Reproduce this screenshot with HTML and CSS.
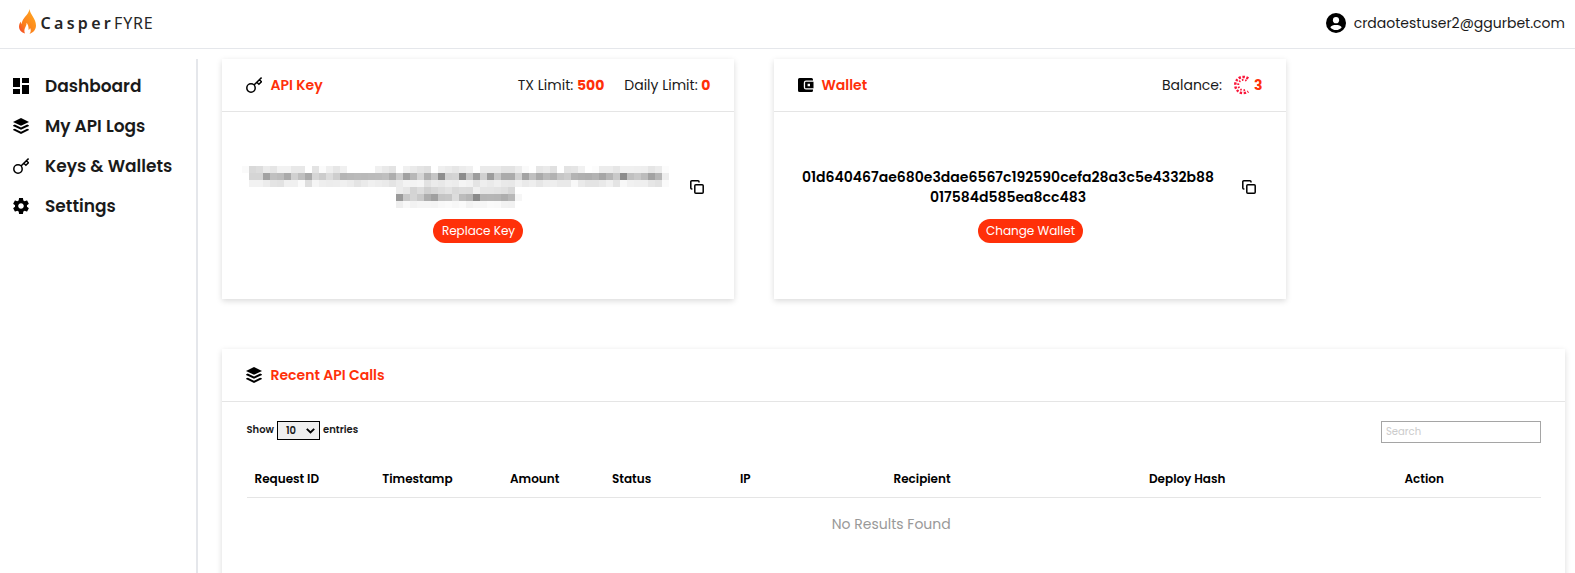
FILE: index.html
```html
<!DOCTYPE html>
<html lang="en">
<head>
<meta charset="utf-8">
<title>CasperFYRE</title>
<link rel="stylesheet" href="styles.css">
</head>
<body>
<svg class="defs" width="0" height="0">
  <symbol id="layers" viewBox="0 0 16 16"><path d="M8 0 16 3.900 8 7.800 0 3.900Z"/><path d="M0 7.400 1.800 6.600 8 9.600 14.200 6.600 16 7.400V8L8 11.800 0 8Z"/><path d="M0 11.500 1.800 10.700 8 13.700 14.200 10.700 16 11.500V12.100L8 16 0 12.100Z"/></symbol>
  <symbol id="key" viewBox="0 0 16 16"><g fill="none" stroke="#000" stroke-width="1.500"><circle cx="5" cy="11" r="4.200"/><path d="M8 8 15.600.5M10.800 5.200l2.100 2.100 2.500-2.500-2-2"/></g></symbol>
  <symbol id="copy" viewBox="0 0 14 14"><g fill="none" stroke="#000" stroke-width="1.500"><rect x="4.800" y="4.800" width="8.400" height="8.400" rx="1"/><path d="M2.400 9H1.800a1 1 0 0 1-1-1V1.800a1 1 0 0 1 1-1H8a1 1 0 0 1 1 1v.8"/></g></symbol>
</svg>
<header class="topbar">
  <div class="logo">
    <svg class="flame" viewBox="0 0 17 25"><defs><linearGradient id="fire" x1="0" y1="1" x2=".8" y2=".2"><stop offset="0" stop-color="#f23a2c"/><stop offset=".4" stop-color="#fb7d1c"/><stop offset="1" stop-color="#ffa020"/></linearGradient></defs><path fill="url(#fire)" d="M10.500 0C11 5.500 17 9.500 17 16.500c0 4-2.500 7-6.500 8.500 1.500-2 1.600-4 .6-6-.3 1-.8 1.600-1.500 2 .2-3-.6-5.500-2-7.200.2 2.800-1.800 4.700-2.200 7.200-.2 1.300.1 2.500.6 3.600C2.500 23.500 0 21 0 17.500c0-2.300 1-4 2-5 0 1.200.2 2 .7 2.700C3 8.500 9.500 6.500 10.500 0Z"/></svg>
    <span class="casper">Casper</span><span class="fyre">FYRE</span>
  </div>
  <div class="user">
    <svg class="avatar" viewBox="0 0 20 20"><circle cx="10" cy="10" r="10"/><circle cx="10" cy="7.200" r="3.100" fill="#fff"/><path fill="#fff" d="M4.300 14.200C5.200 12.500 7.500 12 10 12s4.800.5 5.700 2.200c-1.300 1.800-3.300 2.900-5.700 2.900s-4.400-1.100-5.700-2.900Z"/></svg>
    <span>crdaotestuser2@ggurbet.com</span>
  </div>
</header>
<div class="shell">
  <nav class="sidebar">
    <a class="nav-item"><svg class="icon" viewBox="0 0 16 16"><path d="M0 0h7v9H0zM9 0h7v5H9zM0 11h7v5H0zM9 7h7v9H9z"/></svg><span>Dashboard</span></a>
    <a class="nav-item"><svg class="icon"><use href="#layers"/></svg><span>My API Logs</span></a>
    <a class="nav-item"><svg class="icon"><use href="#key"/></svg><span>Keys &amp; Wallets</span></a>
    <a class="nav-item"><svg class="icon" viewBox="2 2 20 20"><path d="M19.430 12.980c.04-.32.07-.64.07-.98s-.03-.66-.07-.98l2.110-1.650c.19-.15.24-.42.12-.64l-2-3.460c-.12-.22-.39-.3-.61-.22l-2.490 1c-.52-.4-1.080-.73-1.690-.98l-.38-2.650C14.460 2.180 14.250 2 14 2h-4c-.25 0-.46.18-.49.42l-.38 2.650c-.61.25-1.170.59-1.690.98l-2.490-1c-.23-.09-.49 0-.61.22l-2 3.460c-.13.22-.07.49.12.64l2.110 1.650c-.04.32-.07.65-.07.98s.03.66.07.98l-2.110 1.650c-.19.15-.24.42-.12.64l2 3.460c.12.22.39.3.61.22l2.490-1c.52.4 1.080.73 1.690.98l.38 2.650c.03.24.24.42.49.42h4c.25 0 .46-.18.49-.42l.38-2.650c.61-.25 1.170-.59 1.690-.98l2.490 1c.23.09.49 0 .61-.22l2-3.460c.12-.22.07-.49-.12-.64l-2.110-1.650zM12 15.500c-1.930 0-3.500-1.570-3.500-3.500s1.570-3.500 3.500-3.500 3.500 1.570 3.500 3.500-1.570 3.500-3.500 3.500z"/></svg><span>Settings</span></a>
  </nav>
  <main class="content">
    <div class="cards">
      <section class="card">
        <div class="card-head">
          <svg class="icon"><use href="#key"/></svg><h2 class="title">API Key</h2>
          <div class="stats"><span>TX Limit: <b>500</b></span><span>Daily Limit: <b>0</b></span></div>
        </div>
        <div class="card-body">
          <div class="hash-row"><svg class="mosaic" id="mosaic" viewBox="0 0 61 6" shape-rendering="crispEdges"></svg><svg class="copy"><use href="#copy"/></svg></div>
          <button class="pill pill-key">Replace Key</button>
        </div>
      </section>
      <section class="card">
        <div class="card-head card-head-wallet">
          <svg class="icon" viewBox="0 0 16 16"><path d="M1.500 1h12A1.500 1.500 0 0 1 15 2.500V3.500H8A2.200 2.200 0 0 0 5.800 5.700v4.600A2.200 2.200 0 0 0 8 12.500h7v1a1.500 1.500 0 0 1-1.500 1.500h-12A1.500 1.500 0 0 1 0 13.500v-11A1.500 1.500 0 0 1 1.500 1Z"/><path fill-rule="evenodd" d="M8 4.700h7.500v6.600H8a.9.9 0 0 1-.9-.9V5.600A.9.900 0 0 1 8 4.700Zm1.600 2.100v2.400h2.400V6.800Z"/></svg><h2 class="title">Wallet</h2>
          <div class="stats stats-balance"><span>Balance:</span><svg class="spinner" viewBox="0 0 18 20"><g fill="none" stroke="#fa1438"><path stroke-width="2.500" stroke-dasharray="2.300 1.500" d="M14.300 3.600A8.100 8.100 0 1 0 14.300 16.400"/><path stroke-width="1.900" stroke-dasharray="1.500 1.700" d="M12.500 5.800A5.200 5.200 0 1 0 12.500 14.200"/></g></svg><b>3</b></div>
        </div>
        <div class="card-body">
          <div class="hash-row"><p class="hash">01d640467ae680e3dae6567c192590cefa28a3c5e4332b88<br>017584d585ea8cc483</p><svg class="copy"><use href="#copy"/></svg></div>
          <button class="pill pill-wallet">Change Wallet</button>
        </div>
      </section>
    </div>
    <section class="card calls">
      <div class="card-head"><svg class="icon"><use href="#layers"/></svg><h2 class="title">Recent API Calls</h2></div>
      <div class="calls-body">
        <div class="tools">
          <div class="show"><span class="show-a">Show</span><span class="select">10<svg class="chev" viewBox="0 0 9 6"><path d="M.8.8 4.500 4.500 8.200.8" fill="none" stroke="#000" stroke-width="1.900"/></svg></span><span class="show-b">entries</span></div>
          <input class="search" placeholder="Search">
        </div>
        <div class="thead"><span>Request ID</span><span>Timestamp</span><span>Amount</span><span>Status</span><span>IP</span><span>Recipient</span><span>Deploy Hash</span><span>Action</span></div>
        <p class="empty">No Results Found</p>
      </div>
    </section>
  </main>
</div>
<script src="mosaic.js"></script>
</body>
</html>
```
FILE: mosaic.js
```js
// Grey levels of the redacted key, one hex pair per cell; each row has its first column.
const rows = [
  [0, "fad9ddebe5f2f2e8e8ffe3fbefe6f0fffffffff0e9e3fff0eae4e0ffefebe6ecf0ffeaeaeae3e3ecfaffe6eae0ffe3e5f1fffcecece6f0f0efeee5ebfc"],
  [1, "d5d5a3c0bcaad0bfaad6ccdcceb5b8bab9bbbcbfaecca1b8d5b0c68ed2d48cc79ed09cc8ababd2a3c0aabab2c6ccb4b0aeb3a6b6c98cc0c8bca2b5ed"],
  [1, "f2f2ece4e2f0f0fadef5eeecedf0ece4eaf0edeae4ebf3f3f5e2ebe8eeecf5f2e4eeeaefe9e8f1eaeee6edeee9e9f8eae4e4e9f0e4f8f1efefe6e2fa"],
  [22, "ece6d4ddd0d7dde2d9dddcf0e5e5e3e0d8"],
  [22, "9ac8d5c9ada0c4c6dcbcb58ab5b6b5aeb8f6"],
  [22, "eef8f2f5f5f4f8faf7faf2f6f6faf9f2f1"]
];
const svg = document.getElementById("mosaic");
rows.forEach(([start, levels], y) => {
  levels.match(/../g).forEach((v, i) => {
    const r = document.createElementNS("http://www.w3.org/2000/svg", "rect");
    r.setAttribute("x", start + i);
    r.setAttribute("y", y);
    r.setAttribute("width", 1);
    r.setAttribute("height", 1);
    r.setAttribute("fill", "#" + v + v + v);
    svg.appendChild(r);
  });
});
```
FILE: styles.css
```css
* { box-sizing: border-box; }
body { margin: 0; height: 573px; overflow: hidden; background: #fff; color: #1a1a1a; font-family: Poppins, Inter, sans-serif; font-size: 14px; white-space: nowrap; }
h2, p { margin: 0; }
svg { display: block; flex: none; }
.defs { position: absolute; }
.icon { width: 16px; height: 16px; }
.topbar { height: 49px; border-bottom: 1px solid #e5e7eb; display: flex; justify-content: space-between; padding: 0 10px 2px 19px; }
.logo, .user { display: flex; align-items: center; }
.flame { width: 17px; height: 25px; margin-top: -3px; }
.casper, .fyre { font-family: "Noto Sans", sans-serif; font-size: 16px; color: #262626; }
.casper { font-weight: 600; letter-spacing: 3.300px; margin-left: 4.500px; }
.fyre { letter-spacing: .8px; }
.avatar { width: 20px; height: 20px; margin-right: 8px; }
.shell { display: flex; padding-top: 10px; height: 524px; overflow: hidden; }
.sidebar { width: 198px; border-right: 2px solid #e5e7eb; padding: 7px 0 0 13px; flex: none; }
.nav-item { display: flex; align-items: center; height: 40px; gap: 16px; font-size: 17px; font-weight: 600; }
.content { padding-left: 24px; flex: 1; }
.cards { display: flex; gap: 40px; }
.card { width: 512px; height: 240px; background: #fff; box-shadow: 0 2px 6px rgba(0,0,0,.15); }
.card-head { height: 53px; border-bottom: 1px solid #e5e5e5; padding: 0 23.500px 0 24px; display: flex; align-items: center; gap: 8.500px; }
.card-head-wallet { gap: 7.500px; }
.title { font-size: 14px; font-weight: 600; color: #ff3009; }
.stats { margin-left: auto; display: flex; gap: 20px; }
.stats b { font-weight: 700; color: #ff3009; }
.stats-balance { gap: 0; align-items: center; }
.spinner { width: 18px; height: 20px; margin: -1px 2px 0 12px; }
.card-body { padding: 54px 30px 0 20px; display: flex; flex-direction: column; align-items: center; }
.hash-row { display: flex; align-items: center; justify-content: space-between; width: 100%; height: 42px; }
.mosaic { width: 427px; height: 42px; }
.copy { width: 14px; height: 14px; }
.hash { width: 428px; text-align: center; font-weight: 600; line-height: 20px; color: #000; }
.pill { margin: 11px 0 0 10px; height: 24px; border: 0; border-radius: 12px; background: #ff3009; color: #fff; font: 12px Poppins, Inter, sans-serif; padding: 0 0 0 1px; }
.pill-key { width: 90px; }
.pill-wallet { width: 105px; }
.calls { width: 1343px; height: 260px; margin-top: 50px; }
.calls-body { padding: 19px 24px 0 24.500px; }
.tools { display: flex; justify-content: space-between; height: 22px; }
.show { display: flex; height: 19px; align-items: center; font-size: 10px; font-weight: 600; }
.show-a { width: 30.500px; }
.show-a, .show-b { padding-bottom: 2px; }
.select { width: 43px; height: 19px; border: 1px solid #000; background: #efefef; display: flex; align-items: center; justify-content: space-between; padding: 0 4px 0 8px; margin-right: 3px; }
.chev { width: 9px; height: 6px; }
.search { width: 160px; height: 22px; border: 1px solid #a5a5a5; padding: 0 4px; font: 10px Poppins, Inter, sans-serif; border-radius: 0; }
.search::placeholder { color: #ccc; }
.thead { display: grid; grid-template-columns: 127.800px 127.700px 102px 128px 153.500px 255.500px 255.500px 144px; height: 54px; padding-top: 17px; line-height: 35px; border-bottom: 1px solid #e5e5e5; font-size: 12px; font-weight: 600; color: #000; margin-top: 1px; }
.thead span { padding-left: 8px; }
.empty { text-align: center; font-size: 14px; color: #999; line-height: 20px; margin-top: 16px; padding-right: 5px; }
```
